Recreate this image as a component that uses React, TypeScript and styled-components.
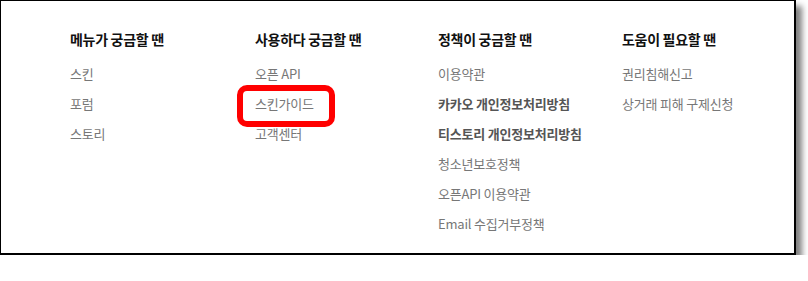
import styled, { createGlobalStyle } from "styled-components";

const GlobalStyle = createGlobalStyle`
  html, body {
    margin: 0;
    padding: 0;
    background: #fff;
  }
  body {
    font-family: "Noto Sans CJK KR", "Noto Sans", sans-serif;
  }
`;

const Frame = styled.div`
  box-sizing: border-box;
  width: 796px;
  height: 255px;
  border: 2px solid #000;
  border-top-width: 1px;
  border-left-width: 1px;
  background: #fff;
  box-shadow: 6px 6px 6px rgba(0, 0, 0, 0.5);
  padding: 26px 0 0 69px;
`;

const Columns = styled.div`
  display: grid;
  grid-template-columns: 185px 183px 184px 170px;
`;

const Column = styled.div`
  display: flex;
  flex-direction: column;
`;

const Heading = styled.h3`
  margin: 0 0 8px;
  font-size: 14px;
  font-weight: 700;
  line-height: 24px;
  color: #111;
  letter-spacing: -0.3px;
`;

const Item = styled.a<{ $bold?: boolean; $marked?: boolean }>`
  position: relative;
  align-self: flex-start;
  font-size: 13px;
  line-height: 30px;
  color: ${p => (p.$bold ? "#555" : "#777")};
  font-weight: ${p => (p.$bold ? 700 : 400)};
  text-decoration: none;
  letter-spacing: -0.2px;

  ${p =>
    p.$marked &&
    `
    &::after {
      content: "";
      position: absolute;
      left: -18px;
      top: -4px;
      width: 98px;
      height: 42px;
      box-sizing: border-box;
      border: 6px solid #ff0000;
      border-radius: 10px;
    }
  `}
`;

interface ILink {
  label: string;
  bold?: boolean;
  marked?: boolean;
}

interface IGroup {
  title: string;
  links: ILink[];
}

const groups: IGroup[] = [
  {
    title: "메뉴가 궁금할 땐",
    links: [{ label: "스킨" }, { label: "포럼" }, { label: "스토리" }],
  },
  {
    title: "사용하다 궁금할 땐",
    links: [{ label: "오픈 API" }, { label: "스킨가이드", marked: true }, { label: "고객센터" }],
  },
  {
    title: "정책이 궁금할 땐",
    links: [
      { label: "이용약관" },
      { label: "카카오 개인정보처리방침", bold: true },
      { label: "티스토리 개인정보처리방침", bold: true },
      { label: "청소년보호정책" },
      { label: "오픈API 이용약관" },
      { label: "Email 수집거부정책" },
    ],
  },
  {
    title: "도움이 필요할 땐",
    links: [{ label: "권리침해신고" }, { label: "상거래 피해 구제신청" }],
  },
];

function App() {
  return (
    <>
      <GlobalStyle />
      <Frame>
        <Columns>
          {groups.map((group, index) => (
            <Column key={`group-${index}`}>
              <Heading>{group.title}</Heading>
              {group.links.map((link, i) => (
                <Item key={`link-${index}-${i}`} href="#" $bold={link.bold} $marked={link.marked}>
                  {link.label}
                </Item>
              ))}
            </Column>
          ))}
        </Columns>
      </Frame>
    </>
  );
}

export default App;
